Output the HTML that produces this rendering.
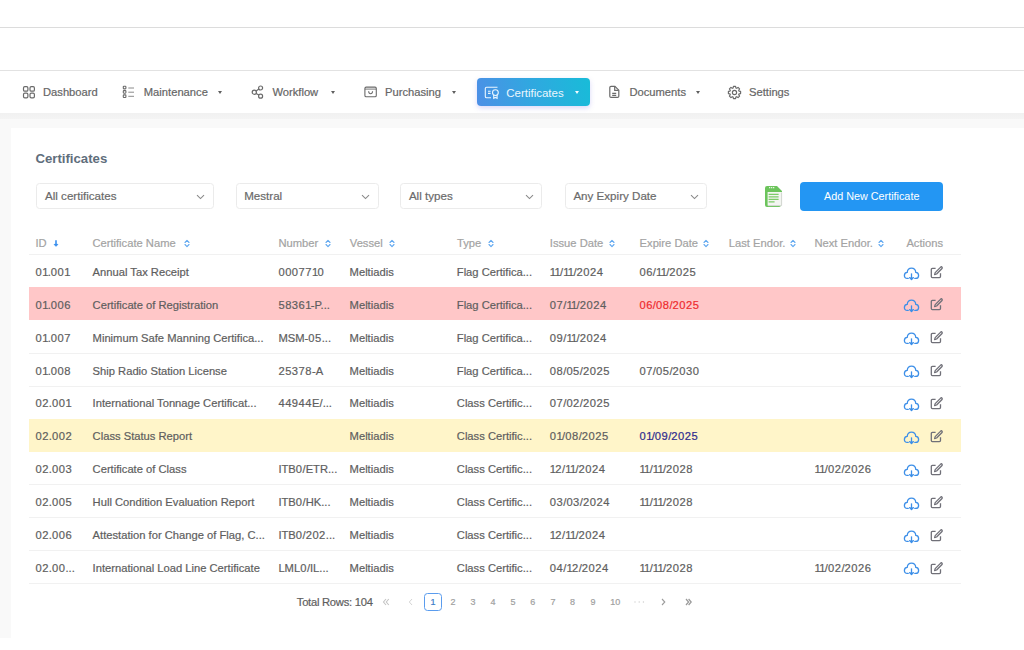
<!DOCTYPE html>
<html><head><meta charset="utf-8"><style>
html,body{margin:0;padding:0;}
body{width:1024px;height:650px;position:relative;overflow:hidden;background:#fff;font-family:"Liberation Sans",sans-serif;}
.t{position:absolute;white-space:nowrap;line-height:1;-webkit-text-stroke:0.2px currentColor;}
.ic{position:absolute;overflow:visible;}
.topline{position:absolute;left:0;width:1024px;height:1px;background:#dcdcdc;}
.content{position:absolute;left:0;top:113px;width:1024px;height:525px;background:#f9f9f9;}
.navshadow{position:absolute;left:0;top:113px;width:1024px;height:5.5px;background:linear-gradient(#f1f1f1,#f4f4f4);}
.card{position:absolute;left:11px;top:128px;width:1013px;height:510px;background:#fff;}
.caret{position:absolute;width:0;height:0;border-left:2.5px solid transparent;border-right:2.5px solid transparent;border-top:3.1px solid #5f5f5f;}
.certbtn{position:absolute;left:477px;top:78px;width:112.5px;height:28.3px;border-radius:4px;background:linear-gradient(75deg,#4d8fe6 0%,#30a8e0 50%,#18bcd8 100%);box-shadow:0 2px 5px rgba(110,100,230,0.25);}
.sel{position:absolute;top:183.2px;height:26px;border:1px solid #ebebeb;border-radius:3.5px;box-sizing:border-box;background:#fff;}
.addbtn{position:absolute;left:800.4px;top:182.2px;width:142.6px;height:28.6px;border-radius:4px;background:#2396f3;color:#fff;font-size:10.8px;line-height:29px;text-align:center;}
.hl{position:absolute;left:29px;width:932px;height:1px;background:#f1f1f1;}
.rowbg{position:absolute;left:28.6px;width:932.4px;}
.pg1{position:absolute;left:424.2px;top:593.2px;width:17.8px;height:17.4px;box-sizing:border-box;border:1.2px solid #5a9cee;border-radius:3.5px;}
</style></head><body>
<div class="topline" style="top:27px"></div>
<div class="topline" style="top:70px;background:#e2e2e2"></div>
<div class="content"></div>
<div class="navshadow"></div>
<div class="card"></div>

<svg class="ic" style="left:22px;top:85px" width="14" height="14" viewBox="0 0 14 14" fill="none" stroke="#6a6a6a" stroke-width="1.2">
<rect x="1.5" y="1.6" width="4.4" height="4.6" rx="1.3"/><rect x="8.0" y="1.6" width="4.4" height="4.6" rx="1.3"/>
<rect x="1.5" y="8.2" width="4.4" height="4.6" rx="1.3"/><rect x="8.0" y="8.2" width="4.4" height="4.6" rx="1.3"/>
</svg>
<svg class="ic" style="left:121px;top:85px" width="14" height="14" viewBox="0 0 14 14" fill="none" stroke="#6a6a6a" stroke-width="1.1">
<rect x="2.3" y="1.3" width="2.6" height="2.6" rx="0.6"/><rect x="2.3" y="5.6" width="2.6" height="2.6" rx="0.6"/><rect x="2.3" y="9.9" width="2.6" height="2.6" rx="0.6"/>
<path d="M7.3 3.0H13M7.3 7.2H13M7.3 11.3H13" stroke="#8a8a8a" stroke-width="1"/>
</svg>
<svg class="ic" style="left:250px;top:85px" width="14" height="14" viewBox="0 0 14 14" fill="none" stroke="#6a6a6a" stroke-width="1.2">
<circle cx="4.3" cy="7.2" r="2.1"/><circle cx="10.6" cy="3.0" r="2.0"/><circle cx="10.6" cy="11.2" r="2.0"/>
<path d="M6.1 6.0L8.9 4.1M6.1 8.4L8.9 10.1"/>
</svg>
<svg class="ic" style="left:363px;top:85px" width="15" height="14" viewBox="0 0 15 14" fill="none" stroke="#6a6a6a" stroke-width="1.1">
<rect x="1.9" y="2.1" width="11.4" height="9.7" rx="1.3"/><path d="M1.9 4.1H13.3" stroke-width="0.9"/><path d="M5.6 6.3Q5.8 8.7 7.6 8.7Q9.4 8.7 9.6 6.3"/>
</svg>
<svg class="ic" style="left:608.3px;top:85.4px" width="13" height="14" viewBox="0 0 13 14" fill="none" stroke="#6a6a6a" stroke-width="1.2">
<path d="M3.0 1.3H6.9L10.8 5.2V11.2Q10.8 12.4 9.6 12.4H3.0Q1.8 12.4 1.8 11.2V2.5Q1.8 1.3 3.0 1.3Z"/><path d="M6.7 1.5V5.4H10.6"/><path d="M4.2 8.3H8.2M4.2 10.3H8.2"/>
</svg>
<svg class="ic" style="left:727.4px;top:84.6px" width="15" height="15" viewBox="0 0 15 15" fill="none" stroke="#6a6a6a" stroke-width="1.15" stroke-linejoin="round">
<path d="M6.09 3.02 L6.42 1.39 L8.58 1.39 L8.91 3.02 L9.67 3.33 L11.06 2.42 L12.58 3.94 L11.67 5.33 L11.98 6.09 L13.61 6.42 L13.61 8.58 L11.98 8.91 L11.67 9.67 L12.58 11.06 L11.06 12.58 L9.67 11.67 L8.91 11.98 L8.58 13.61 L6.42 13.61 L6.09 11.98 L5.33 11.67 L3.94 12.58 L2.42 11.06 L3.33 9.67 L3.02 8.91 L1.39 8.58 L1.39 6.42 L3.02 6.09 L3.33 5.33 L2.42 3.94 L3.94 2.42 L5.33 3.33Z"/>
<circle cx="7.5" cy="7.5" r="2.1"/>
</svg>

<div class="t" style="left:43.00px;top:87.28px;font-size:11.2px;color:#666666;font-weight:400;">Dashboard</div>
<div class="t" style="left:143.80px;top:87.28px;font-size:11.2px;color:#666666;font-weight:400;">Maintenance</div>
<div class="caret" style="left:217.8px;top:90.5px;border-top-color:#5f5f5f"></div>
<div class="t" style="left:272.40px;top:87.28px;font-size:11.2px;color:#666666;font-weight:400;">Workflow</div>
<div class="caret" style="left:331.2px;top:90.5px;border-top-color:#5f5f5f"></div>
<div class="t" style="left:385.00px;top:87.28px;font-size:11.2px;color:#666666;font-weight:400;">Purchasing</div>
<div class="caret" style="left:451.8px;top:90.5px;border-top-color:#5f5f5f"></div>
<div class="t" style="left:629.40px;top:87.28px;font-size:11.2px;color:#666666;font-weight:400;">Documents</div>
<div class="caret" style="left:696.2px;top:90.5px;border-top-color:#5f5f5f"></div>
<div class="t" style="left:749.00px;top:87.28px;font-size:11.2px;color:#666666;font-weight:400;">Settings</div>


<div class="certbtn"></div>
<svg class="ic" style="left:484.3px;top:85.6px" width="16" height="15" viewBox="0 0 16 15" fill="none" stroke="#eaf6ff" stroke-width="1.1">
<path d="M13.5 1.3H2.6Q1.3 1.3 1.3 2.6V10.5Q1.3 11.8 2.6 11.8H7"/><path d="M4 5.2H6.6M4 7.4H6.6"/>
<circle cx="11.4" cy="6.6" r="2.9"/><path d="M9.7 9.0V12.3L11.4 11.4L13.1 12.3V9.0"/>
</svg>
<div class="t" style="left:506.20px;top:87.62px;font-size:11.5px;color:#eaf6fd;font-weight:400;-webkit-text-stroke:0;">Certificates</div>
<div class="caret" style="left:574.6px;top:91.0px;border-top-color:#f4fbff"></div>

<div class="t" style="left:35.40px;top:151.98px;font-size:13.2px;color:#5f6e7c;font-weight:700;-webkit-text-stroke:0;">Certificates</div>

<div class="sel" style="left:35.5px;width:178.5px"></div>
<div class="t" style="left:45.00px;top:190.14px;font-size:11.6px;color:#6a6a6a;font-weight:400;">All certificates</div>
<svg class="ic" style="left:196.2px;top:193.6px" width="9" height="6" viewBox="0 0 9 6" fill="none" stroke="#8a8a8a" stroke-width="1.1"><path d="M1 1.2L4.5 4.6L8 1.2"/></svg>
<div class="sel" style="left:236px;width:143px"></div>
<div class="t" style="left:244.20px;top:190.14px;font-size:11.6px;color:#6a6a6a;font-weight:400;">Mestral</div>
<svg class="ic" style="left:360.6px;top:193.6px" width="9" height="6" viewBox="0 0 9 6" fill="none" stroke="#8a8a8a" stroke-width="1.1"><path d="M1 1.2L4.5 4.6L8 1.2"/></svg>
<div class="sel" style="left:400.3px;width:142px"></div>
<div class="t" style="left:408.90px;top:190.14px;font-size:11.6px;color:#6a6a6a;font-weight:400;">All types</div>
<svg class="ic" style="left:525.2px;top:193.6px" width="9" height="6" viewBox="0 0 9 6" fill="none" stroke="#8a8a8a" stroke-width="1.1"><path d="M1 1.2L4.5 4.6L8 1.2"/></svg>
<div class="sel" style="left:564.8px;width:142.2px"></div>
<div class="t" style="left:573.40px;top:190.14px;font-size:11.6px;color:#6a6a6a;font-weight:400;">Any Expiry Date</div>
<svg class="ic" style="left:689.6px;top:193.6px" width="9" height="6" viewBox="0 0 9 6" fill="none" stroke="#8a8a8a" stroke-width="1.1"><path d="M1 1.2L4.5 4.6L8 1.2"/></svg>


<svg class="ic" style="left:764px;top:185px" width="19" height="23" viewBox="0 0 19 23">
<path d="M3 1H13L18 6V7H4V20.5H16.5V21.6Q16 22 15 22H3Q1 22 1 20V3Q1 1 3 1Z" fill="#6cc45c"/>
<rect x="3.6" y="7" width="14.2" height="13.6" fill="#f3f5f1"/>
<path d="M17.6 7.5V20.6H4" stroke="#d2d6d0" stroke-width="1" fill="none"/>
<path d="M4.6 9.3H14.6M4.6 11.8H14.6M4.6 14.3H14.6M4.6 16.8H10.6" stroke="#7ccb68" stroke-width="1.2"/>
<path d="M5 2.6H11" stroke="#e6f7e0" stroke-width="1.2" stroke-dasharray="1.3 0.7"/>
</svg>

<div class="addbtn">Add New Certificate</div>

<div class="t" style="left:35.40px;top:237.68px;font-size:11.2px;color:#a3a3a3;font-weight:400;">ID</div>
<svg class="ic" style="left:51.5px;top:239px" width="8" height="9" viewBox="0 0 8 9" fill="none" stroke="#3a90ee" stroke-width="1.6" stroke-linejoin="round"><path d="M4 1.3V6"/><path d="M2.2 5.4L4 7.3L5.8 5.4Z" fill="#3a90ee" stroke-width="1"/></svg>
<div class="t" style="left:92.40px;top:237.68px;font-size:11.2px;color:#a3a3a3;font-weight:400;">Certificate Name</div>
<svg class="ic" style="left:183.5px;top:239.3px" width="6" height="9" viewBox="0 0 6 9" fill="none" stroke="#60a8f0" stroke-width="1.1" stroke-linecap="round" stroke-linejoin="round"><path d="M1 3.5L3 1.4L5 3.5M1 5.5L3 7.6L5 5.5"/></svg>
<div class="t" style="left:278.40px;top:237.68px;font-size:11.2px;color:#a3a3a3;font-weight:400;">Number</div>
<svg class="ic" style="left:325.0px;top:239.3px" width="6" height="9" viewBox="0 0 6 9" fill="none" stroke="#60a8f0" stroke-width="1.1" stroke-linecap="round" stroke-linejoin="round"><path d="M1 3.5L3 1.4L5 3.5M1 5.5L3 7.6L5 5.5"/></svg>
<div class="t" style="left:349.80px;top:237.68px;font-size:11.2px;color:#a3a3a3;font-weight:400;">Vessel</div>
<svg class="ic" style="left:389.0px;top:239.3px" width="6" height="9" viewBox="0 0 6 9" fill="none" stroke="#60a8f0" stroke-width="1.1" stroke-linecap="round" stroke-linejoin="round"><path d="M1 3.5L3 1.4L5 3.5M1 5.5L3 7.6L5 5.5"/></svg>
<div class="t" style="left:457.00px;top:237.68px;font-size:11.2px;color:#a3a3a3;font-weight:400;">Type</div>
<svg class="ic" style="left:487.5px;top:239.3px" width="6" height="9" viewBox="0 0 6 9" fill="none" stroke="#60a8f0" stroke-width="1.1" stroke-linecap="round" stroke-linejoin="round"><path d="M1 3.5L3 1.4L5 3.5M1 5.5L3 7.6L5 5.5"/></svg>
<div class="t" style="left:549.80px;top:237.68px;font-size:11.2px;color:#a3a3a3;font-weight:400;">Issue Date</div>
<svg class="ic" style="left:608.7px;top:239.3px" width="6" height="9" viewBox="0 0 6 9" fill="none" stroke="#60a8f0" stroke-width="1.1" stroke-linecap="round" stroke-linejoin="round"><path d="M1 3.5L3 1.4L5 3.5M1 5.5L3 7.6L5 5.5"/></svg>
<div class="t" style="left:639.60px;top:237.68px;font-size:11.2px;color:#a3a3a3;font-weight:400;">Expire Date</div>
<svg class="ic" style="left:703.3px;top:239.3px" width="6" height="9" viewBox="0 0 6 9" fill="none" stroke="#60a8f0" stroke-width="1.1" stroke-linecap="round" stroke-linejoin="round"><path d="M1 3.5L3 1.4L5 3.5M1 5.5L3 7.6L5 5.5"/></svg>
<div class="t" style="left:728.80px;top:237.68px;font-size:11.2px;color:#a3a3a3;font-weight:400;">Last Endor.</div>
<svg class="ic" style="left:790.0px;top:239.3px" width="6" height="9" viewBox="0 0 6 9" fill="none" stroke="#60a8f0" stroke-width="1.1" stroke-linecap="round" stroke-linejoin="round"><path d="M1 3.5L3 1.4L5 3.5M1 5.5L3 7.6L5 5.5"/></svg>
<div class="t" style="left:814.40px;top:237.68px;font-size:11.2px;color:#a3a3a3;font-weight:400;">Next Endor.</div>
<svg class="ic" style="left:878.0px;top:239.3px" width="6" height="9" viewBox="0 0 6 9" fill="none" stroke="#60a8f0" stroke-width="1.1" stroke-linecap="round" stroke-linejoin="round"><path d="M1 3.5L3 1.4L5 3.5M1 5.5L3 7.6L5 5.5"/></svg>
<div class="t" style="left:906.40px;top:237.68px;font-size:11.2px;color:#a3a3a3;font-weight:400;">Actions</div>

<div class="hl" style="top:254.10px"></div>
<div class="hl" style="top:286.98px"></div>
<div class="t" style="left:35.40px;top:266.88px;font-size:11.2px;color:#5e5e5e;font-weight:400;"><span style="letter-spacing:0.5px">0</span><span style="letter-spacing:-0.7px">1</span>.<span style="letter-spacing:0.5px">0</span><span style="letter-spacing:0.5px">0</span><span style="letter-spacing:-0.7px">1</span></div>
<div class="t" style="left:92.60px;top:266.88px;font-size:11.2px;color:#5e5e5e;font-weight:400;">Annual Tax Receipt</div>
<div class="t" style="left:278.40px;top:266.88px;font-size:11.2px;color:#5e5e5e;font-weight:400;"><span style="letter-spacing:0.5px">0</span><span style="letter-spacing:0.5px">0</span><span style="letter-spacing:0.5px">0</span><span style="letter-spacing:0.5px">7</span><span style="letter-spacing:0.5px">7</span><span style="letter-spacing:-0.7px">1</span><span style="letter-spacing:0.5px">0</span></div>
<div class="t" style="left:349.60px;top:266.88px;font-size:11.2px;color:#5e5e5e;font-weight:400;">Meltiadis</div>
<div class="t" style="left:456.80px;top:266.88px;font-size:11.2px;color:#5e5e5e;font-weight:400;">Flag Certifica...</div>
<div class="t" style="left:549.80px;top:266.88px;font-size:11.2px;color:#5e5e5e;font-weight:400;"><span style="letter-spacing:-0.7px">1</span><span style="letter-spacing:-0.7px">1</span>/<span style="letter-spacing:-0.7px">1</span><span style="letter-spacing:-0.7px">1</span>/<span style="letter-spacing:0.5px">2</span><span style="letter-spacing:0.5px">0</span><span style="letter-spacing:0.5px">2</span><span style="letter-spacing:0.5px">4</span></div>
<div class="t" style="left:639.40px;top:266.88px;font-size:11.2px;color:#5e5e5e;font-weight:400;"><span style="letter-spacing:0.5px">0</span><span style="letter-spacing:0.5px">6</span>/<span style="letter-spacing:-0.7px">1</span><span style="letter-spacing:-0.7px">1</span>/<span style="letter-spacing:0.5px">2</span><span style="letter-spacing:0.5px">0</span><span style="letter-spacing:0.5px">2</span><span style="letter-spacing:0.5px">5</span></div>
<svg class="ic" style="left:903px;top:265.50px" width="17" height="15" viewBox="0 0 17 15" fill="none" stroke="#3d8fe8" stroke-width="1.3" stroke-linecap="round">
<path d="M5.2 12.4H4.3Q1.4 12.4 1.4 9.4Q1.4 6.6 4.2 6.4Q4.6 2.2 8.5 2.2Q12.4 2.2 12.8 6.4Q15.6 6.6 15.6 9.4Q15.6 12.4 12.7 12.4H11.8"/>
<path d="M8.5 7.8V13"/><path d="M6.6 11.6L8.5 13.6L10.4 11.6" fill="#3d8fe8" stroke-linejoin="round"/>
</svg>
<svg class="ic" style="left:929px;top:264.60px" width="15" height="15" viewBox="0 0 15 15" fill="none" stroke="#707078" stroke-width="1.3" stroke-linejoin="round">
<path d="M6.6 3.4H3.4Q2.3 3.4 2.3 4.5V11.5Q2.3 12.6 3.4 12.6H10.4Q11.5 12.6 11.5 11.5V8.3"/>
<path d="M12.6 1.6Q13.8 2.8 12.8 3.8L7.6 9L5.6 9.6L6.2 7.6L11.4 2.4Q12 1.6 12.6 1.6Z"/>
</svg>
<div class="rowbg" style="top:287.48px;height:32.88px;background:#ffc7c8"></div>
<div class="t" style="left:35.40px;top:299.76px;font-size:11.2px;color:#5e5e5e;font-weight:400;"><span style="letter-spacing:0.5px">0</span><span style="letter-spacing:-0.7px">1</span>.<span style="letter-spacing:0.5px">0</span><span style="letter-spacing:0.5px">0</span><span style="letter-spacing:0.5px">6</span></div>
<div class="t" style="left:92.60px;top:299.76px;font-size:11.2px;color:#5e5e5e;font-weight:400;">Certificate of Registration</div>
<div class="t" style="left:278.40px;top:299.76px;font-size:11.2px;color:#5e5e5e;font-weight:400;"><span style="letter-spacing:0.5px">5</span><span style="letter-spacing:0.5px">8</span><span style="letter-spacing:0.5px">3</span><span style="letter-spacing:0.5px">6</span><span style="letter-spacing:-0.7px">1</span>-P...</div>
<div class="t" style="left:349.60px;top:299.76px;font-size:11.2px;color:#5e5e5e;font-weight:400;">Meltiadis</div>
<div class="t" style="left:456.80px;top:299.76px;font-size:11.2px;color:#5e5e5e;font-weight:400;">Flag Certifica...</div>
<div class="t" style="left:549.80px;top:299.76px;font-size:11.2px;color:#5e5e5e;font-weight:400;"><span style="letter-spacing:0.5px">0</span><span style="letter-spacing:0.5px">7</span>/<span style="letter-spacing:-0.7px">1</span><span style="letter-spacing:-0.7px">1</span>/<span style="letter-spacing:0.5px">2</span><span style="letter-spacing:0.5px">0</span><span style="letter-spacing:0.5px">2</span><span style="letter-spacing:0.5px">4</span></div>
<div class="t" style="left:639.40px;top:299.76px;font-size:11.2px;color:#ee2b2e;font-weight:400;"><span style="letter-spacing:0.5px">0</span><span style="letter-spacing:0.5px">6</span>/<span style="letter-spacing:0.5px">0</span><span style="letter-spacing:0.5px">8</span>/<span style="letter-spacing:0.5px">2</span><span style="letter-spacing:0.5px">0</span><span style="letter-spacing:0.5px">2</span><span style="letter-spacing:0.5px">5</span></div>
<svg class="ic" style="left:903px;top:298.38px" width="17" height="15" viewBox="0 0 17 15" fill="none" stroke="#3d8fe8" stroke-width="1.3" stroke-linecap="round">
<path d="M5.2 12.4H4.3Q1.4 12.4 1.4 9.4Q1.4 6.6 4.2 6.4Q4.6 2.2 8.5 2.2Q12.4 2.2 12.8 6.4Q15.6 6.6 15.6 9.4Q15.6 12.4 12.7 12.4H11.8"/>
<path d="M8.5 7.8V13"/><path d="M6.6 11.6L8.5 13.6L10.4 11.6" fill="#3d8fe8" stroke-linejoin="round"/>
</svg>
<svg class="ic" style="left:929px;top:297.48px" width="15" height="15" viewBox="0 0 15 15" fill="none" stroke="#707078" stroke-width="1.3" stroke-linejoin="round">
<path d="M6.6 3.4H3.4Q2.3 3.4 2.3 4.5V11.5Q2.3 12.6 3.4 12.6H10.4Q11.5 12.6 11.5 11.5V8.3"/>
<path d="M12.6 1.6Q13.8 2.8 12.8 3.8L7.6 9L5.6 9.6L6.2 7.6L11.4 2.4Q12 1.6 12.6 1.6Z"/>
</svg>
<div class="hl" style="top:352.74px"></div>
<div class="t" style="left:35.40px;top:332.64px;font-size:11.2px;color:#5e5e5e;font-weight:400;"><span style="letter-spacing:0.5px">0</span><span style="letter-spacing:-0.7px">1</span>.<span style="letter-spacing:0.5px">0</span><span style="letter-spacing:0.5px">0</span><span style="letter-spacing:0.5px">7</span></div>
<div class="t" style="left:92.60px;top:332.64px;font-size:11.2px;color:#5e5e5e;font-weight:400;">Minimum Safe Manning Certifica...</div>
<div class="t" style="left:278.40px;top:332.64px;font-size:11.2px;color:#5e5e5e;font-weight:400;">MSM-<span style="letter-spacing:0.5px">0</span><span style="letter-spacing:0.5px">5</span>...</div>
<div class="t" style="left:349.60px;top:332.64px;font-size:11.2px;color:#5e5e5e;font-weight:400;">Meltiadis</div>
<div class="t" style="left:456.80px;top:332.64px;font-size:11.2px;color:#5e5e5e;font-weight:400;">Flag Certifica...</div>
<div class="t" style="left:549.80px;top:332.64px;font-size:11.2px;color:#5e5e5e;font-weight:400;"><span style="letter-spacing:0.5px">0</span><span style="letter-spacing:0.5px">9</span>/<span style="letter-spacing:-0.7px">1</span><span style="letter-spacing:-0.7px">1</span>/<span style="letter-spacing:0.5px">2</span><span style="letter-spacing:0.5px">0</span><span style="letter-spacing:0.5px">2</span><span style="letter-spacing:0.5px">4</span></div>
<svg class="ic" style="left:903px;top:331.26px" width="17" height="15" viewBox="0 0 17 15" fill="none" stroke="#3d8fe8" stroke-width="1.3" stroke-linecap="round">
<path d="M5.2 12.4H4.3Q1.4 12.4 1.4 9.4Q1.4 6.6 4.2 6.4Q4.6 2.2 8.5 2.2Q12.4 2.2 12.8 6.4Q15.6 6.6 15.6 9.4Q15.6 12.4 12.7 12.4H11.8"/>
<path d="M8.5 7.8V13"/><path d="M6.6 11.6L8.5 13.6L10.4 11.6" fill="#3d8fe8" stroke-linejoin="round"/>
</svg>
<svg class="ic" style="left:929px;top:330.36px" width="15" height="15" viewBox="0 0 15 15" fill="none" stroke="#707078" stroke-width="1.3" stroke-linejoin="round">
<path d="M6.6 3.4H3.4Q2.3 3.4 2.3 4.5V11.5Q2.3 12.6 3.4 12.6H10.4Q11.5 12.6 11.5 11.5V8.3"/>
<path d="M12.6 1.6Q13.8 2.8 12.8 3.8L7.6 9L5.6 9.6L6.2 7.6L11.4 2.4Q12 1.6 12.6 1.6Z"/>
</svg>
<div class="hl" style="top:385.62px"></div>
<div class="t" style="left:35.40px;top:365.52px;font-size:11.2px;color:#5e5e5e;font-weight:400;"><span style="letter-spacing:0.5px">0</span><span style="letter-spacing:-0.7px">1</span>.<span style="letter-spacing:0.5px">0</span><span style="letter-spacing:0.5px">0</span><span style="letter-spacing:0.5px">8</span></div>
<div class="t" style="left:92.60px;top:365.52px;font-size:11.2px;color:#5e5e5e;font-weight:400;">Ship Radio Station License</div>
<div class="t" style="left:278.40px;top:365.52px;font-size:11.2px;color:#5e5e5e;font-weight:400;"><span style="letter-spacing:0.5px">2</span><span style="letter-spacing:0.5px">5</span><span style="letter-spacing:0.5px">3</span><span style="letter-spacing:0.5px">7</span><span style="letter-spacing:0.5px">8</span>-A</div>
<div class="t" style="left:349.60px;top:365.52px;font-size:11.2px;color:#5e5e5e;font-weight:400;">Meltiadis</div>
<div class="t" style="left:456.80px;top:365.52px;font-size:11.2px;color:#5e5e5e;font-weight:400;">Flag Certifica...</div>
<div class="t" style="left:549.80px;top:365.52px;font-size:11.2px;color:#5e5e5e;font-weight:400;"><span style="letter-spacing:0.5px">0</span><span style="letter-spacing:0.5px">8</span>/<span style="letter-spacing:0.5px">0</span><span style="letter-spacing:0.5px">5</span>/<span style="letter-spacing:0.5px">2</span><span style="letter-spacing:0.5px">0</span><span style="letter-spacing:0.5px">2</span><span style="letter-spacing:0.5px">5</span></div>
<div class="t" style="left:639.40px;top:365.52px;font-size:11.2px;color:#5e5e5e;font-weight:400;"><span style="letter-spacing:0.5px">0</span><span style="letter-spacing:0.5px">7</span>/<span style="letter-spacing:0.5px">0</span><span style="letter-spacing:0.5px">5</span>/<span style="letter-spacing:0.5px">2</span><span style="letter-spacing:0.5px">0</span><span style="letter-spacing:0.5px">3</span><span style="letter-spacing:0.5px">0</span></div>
<svg class="ic" style="left:903px;top:364.14px" width="17" height="15" viewBox="0 0 17 15" fill="none" stroke="#3d8fe8" stroke-width="1.3" stroke-linecap="round">
<path d="M5.2 12.4H4.3Q1.4 12.4 1.4 9.4Q1.4 6.6 4.2 6.4Q4.6 2.2 8.5 2.2Q12.4 2.2 12.8 6.4Q15.6 6.6 15.6 9.4Q15.6 12.4 12.7 12.4H11.8"/>
<path d="M8.5 7.8V13"/><path d="M6.6 11.6L8.5 13.6L10.4 11.6" fill="#3d8fe8" stroke-linejoin="round"/>
</svg>
<svg class="ic" style="left:929px;top:363.24px" width="15" height="15" viewBox="0 0 15 15" fill="none" stroke="#707078" stroke-width="1.3" stroke-linejoin="round">
<path d="M6.6 3.4H3.4Q2.3 3.4 2.3 4.5V11.5Q2.3 12.6 3.4 12.6H10.4Q11.5 12.6 11.5 11.5V8.3"/>
<path d="M12.6 1.6Q13.8 2.8 12.8 3.8L7.6 9L5.6 9.6L6.2 7.6L11.4 2.4Q12 1.6 12.6 1.6Z"/>
</svg>
<div class="hl" style="top:418.50px"></div>
<div class="t" style="left:35.40px;top:398.40px;font-size:11.2px;color:#5e5e5e;font-weight:400;"><span style="letter-spacing:0.5px">0</span><span style="letter-spacing:0.5px">2</span>.<span style="letter-spacing:0.5px">0</span><span style="letter-spacing:0.5px">0</span><span style="letter-spacing:-0.7px">1</span></div>
<div class="t" style="left:92.60px;top:398.40px;font-size:11.2px;color:#5e5e5e;font-weight:400;">International Tonnage Certificat...</div>
<div class="t" style="left:278.40px;top:398.40px;font-size:11.2px;color:#5e5e5e;font-weight:400;"><span style="letter-spacing:0.5px">4</span><span style="letter-spacing:0.5px">4</span><span style="letter-spacing:0.5px">9</span><span style="letter-spacing:0.5px">4</span><span style="letter-spacing:0.5px">4</span>E/...</div>
<div class="t" style="left:349.60px;top:398.40px;font-size:11.2px;color:#5e5e5e;font-weight:400;">Meltiadis</div>
<div class="t" style="left:456.80px;top:398.40px;font-size:11.2px;color:#5e5e5e;font-weight:400;">Class Certific...</div>
<div class="t" style="left:549.80px;top:398.40px;font-size:11.2px;color:#5e5e5e;font-weight:400;"><span style="letter-spacing:0.5px">0</span><span style="letter-spacing:0.5px">7</span>/<span style="letter-spacing:0.5px">0</span><span style="letter-spacing:0.5px">2</span>/<span style="letter-spacing:0.5px">2</span><span style="letter-spacing:0.5px">0</span><span style="letter-spacing:0.5px">2</span><span style="letter-spacing:0.5px">5</span></div>
<svg class="ic" style="left:903px;top:397.02px" width="17" height="15" viewBox="0 0 17 15" fill="none" stroke="#3d8fe8" stroke-width="1.3" stroke-linecap="round">
<path d="M5.2 12.4H4.3Q1.4 12.4 1.4 9.4Q1.4 6.6 4.2 6.4Q4.6 2.2 8.5 2.2Q12.4 2.2 12.8 6.4Q15.6 6.6 15.6 9.4Q15.6 12.4 12.7 12.4H11.8"/>
<path d="M8.5 7.8V13"/><path d="M6.6 11.6L8.5 13.6L10.4 11.6" fill="#3d8fe8" stroke-linejoin="round"/>
</svg>
<svg class="ic" style="left:929px;top:396.12px" width="15" height="15" viewBox="0 0 15 15" fill="none" stroke="#707078" stroke-width="1.3" stroke-linejoin="round">
<path d="M6.6 3.4H3.4Q2.3 3.4 2.3 4.5V11.5Q2.3 12.6 3.4 12.6H10.4Q11.5 12.6 11.5 11.5V8.3"/>
<path d="M12.6 1.6Q13.8 2.8 12.8 3.8L7.6 9L5.6 9.6L6.2 7.6L11.4 2.4Q12 1.6 12.6 1.6Z"/>
</svg>
<div class="rowbg" style="top:419.00px;height:32.88px;background:#fff5c9"></div>
<div class="t" style="left:35.40px;top:431.28px;font-size:11.2px;color:#5e5e5e;font-weight:400;"><span style="letter-spacing:0.5px">0</span><span style="letter-spacing:0.5px">2</span>.<span style="letter-spacing:0.5px">0</span><span style="letter-spacing:0.5px">0</span><span style="letter-spacing:0.5px">2</span></div>
<div class="t" style="left:92.60px;top:431.28px;font-size:11.2px;color:#5e5e5e;font-weight:400;">Class Status Report</div>
<div class="t" style="left:349.60px;top:431.28px;font-size:11.2px;color:#5e5e5e;font-weight:400;">Meltiadis</div>
<div class="t" style="left:456.80px;top:431.28px;font-size:11.2px;color:#5e5e5e;font-weight:400;">Class Certific...</div>
<div class="t" style="left:549.80px;top:431.28px;font-size:11.2px;color:#5e5e5e;font-weight:400;"><span style="letter-spacing:0.5px">0</span><span style="letter-spacing:-0.7px">1</span>/<span style="letter-spacing:0.5px">0</span><span style="letter-spacing:0.5px">8</span>/<span style="letter-spacing:0.5px">2</span><span style="letter-spacing:0.5px">0</span><span style="letter-spacing:0.5px">2</span><span style="letter-spacing:0.5px">5</span></div>
<div class="t" style="left:639.40px;top:431.28px;font-size:11.2px;color:#2e2b8e;font-weight:400;"><span style="letter-spacing:0.5px">0</span><span style="letter-spacing:-0.7px">1</span>/<span style="letter-spacing:0.5px">0</span><span style="letter-spacing:0.5px">9</span>/<span style="letter-spacing:0.5px">2</span><span style="letter-spacing:0.5px">0</span><span style="letter-spacing:0.5px">2</span><span style="letter-spacing:0.5px">5</span></div>
<svg class="ic" style="left:903px;top:429.90px" width="17" height="15" viewBox="0 0 17 15" fill="none" stroke="#3d8fe8" stroke-width="1.3" stroke-linecap="round">
<path d="M5.2 12.4H4.3Q1.4 12.4 1.4 9.4Q1.4 6.6 4.2 6.4Q4.6 2.2 8.5 2.2Q12.4 2.2 12.8 6.4Q15.6 6.6 15.6 9.4Q15.6 12.4 12.7 12.4H11.8"/>
<path d="M8.5 7.8V13"/><path d="M6.6 11.6L8.5 13.6L10.4 11.6" fill="#3d8fe8" stroke-linejoin="round"/>
</svg>
<svg class="ic" style="left:929px;top:429.00px" width="15" height="15" viewBox="0 0 15 15" fill="none" stroke="#707078" stroke-width="1.3" stroke-linejoin="round">
<path d="M6.6 3.4H3.4Q2.3 3.4 2.3 4.5V11.5Q2.3 12.6 3.4 12.6H10.4Q11.5 12.6 11.5 11.5V8.3"/>
<path d="M12.6 1.6Q13.8 2.8 12.8 3.8L7.6 9L5.6 9.6L6.2 7.6L11.4 2.4Q12 1.6 12.6 1.6Z"/>
</svg>
<div class="hl" style="top:484.26px"></div>
<div class="t" style="left:35.40px;top:464.16px;font-size:11.2px;color:#5e5e5e;font-weight:400;"><span style="letter-spacing:0.5px">0</span><span style="letter-spacing:0.5px">2</span>.<span style="letter-spacing:0.5px">0</span><span style="letter-spacing:0.5px">0</span><span style="letter-spacing:0.5px">3</span></div>
<div class="t" style="left:92.60px;top:464.16px;font-size:11.2px;color:#5e5e5e;font-weight:400;">Certificate of Class</div>
<div class="t" style="left:278.40px;top:464.16px;font-size:11.2px;color:#5e5e5e;font-weight:400;">ITB<span style="letter-spacing:0.5px">0</span>/ETR...</div>
<div class="t" style="left:349.60px;top:464.16px;font-size:11.2px;color:#5e5e5e;font-weight:400;">Meltiadis</div>
<div class="t" style="left:456.80px;top:464.16px;font-size:11.2px;color:#5e5e5e;font-weight:400;">Class Certific...</div>
<div class="t" style="left:549.80px;top:464.16px;font-size:11.2px;color:#5e5e5e;font-weight:400;"><span style="letter-spacing:-0.7px">1</span><span style="letter-spacing:0.5px">2</span>/<span style="letter-spacing:-0.7px">1</span><span style="letter-spacing:-0.7px">1</span>/<span style="letter-spacing:0.5px">2</span><span style="letter-spacing:0.5px">0</span><span style="letter-spacing:0.5px">2</span><span style="letter-spacing:0.5px">4</span></div>
<div class="t" style="left:639.40px;top:464.16px;font-size:11.2px;color:#5e5e5e;font-weight:400;"><span style="letter-spacing:-0.7px">1</span><span style="letter-spacing:-0.7px">1</span>/<span style="letter-spacing:-0.7px">1</span><span style="letter-spacing:-0.7px">1</span>/<span style="letter-spacing:0.5px">2</span><span style="letter-spacing:0.5px">0</span><span style="letter-spacing:0.5px">2</span><span style="letter-spacing:0.5px">8</span></div>
<div class="t" style="left:814.60px;top:464.16px;font-size:11.2px;color:#5e5e5e;font-weight:400;"><span style="letter-spacing:-0.7px">1</span><span style="letter-spacing:-0.7px">1</span>/<span style="letter-spacing:0.5px">0</span><span style="letter-spacing:0.5px">2</span>/<span style="letter-spacing:0.5px">2</span><span style="letter-spacing:0.5px">0</span><span style="letter-spacing:0.5px">2</span><span style="letter-spacing:0.5px">6</span></div>
<svg class="ic" style="left:903px;top:462.78px" width="17" height="15" viewBox="0 0 17 15" fill="none" stroke="#3d8fe8" stroke-width="1.3" stroke-linecap="round">
<path d="M5.2 12.4H4.3Q1.4 12.4 1.4 9.4Q1.4 6.6 4.2 6.4Q4.6 2.2 8.5 2.2Q12.4 2.2 12.8 6.4Q15.6 6.6 15.6 9.4Q15.6 12.4 12.7 12.4H11.8"/>
<path d="M8.5 7.8V13"/><path d="M6.6 11.6L8.5 13.6L10.4 11.6" fill="#3d8fe8" stroke-linejoin="round"/>
</svg>
<svg class="ic" style="left:929px;top:461.88px" width="15" height="15" viewBox="0 0 15 15" fill="none" stroke="#707078" stroke-width="1.3" stroke-linejoin="round">
<path d="M6.6 3.4H3.4Q2.3 3.4 2.3 4.5V11.5Q2.3 12.6 3.4 12.6H10.4Q11.5 12.6 11.5 11.5V8.3"/>
<path d="M12.6 1.6Q13.8 2.8 12.8 3.8L7.6 9L5.6 9.6L6.2 7.6L11.4 2.4Q12 1.6 12.6 1.6Z"/>
</svg>
<div class="hl" style="top:517.14px"></div>
<div class="t" style="left:35.40px;top:497.04px;font-size:11.2px;color:#5e5e5e;font-weight:400;"><span style="letter-spacing:0.5px">0</span><span style="letter-spacing:0.5px">2</span>.<span style="letter-spacing:0.5px">0</span><span style="letter-spacing:0.5px">0</span><span style="letter-spacing:0.5px">5</span></div>
<div class="t" style="left:92.60px;top:497.04px;font-size:11.2px;color:#5e5e5e;font-weight:400;">Hull Condition Evaluation Report</div>
<div class="t" style="left:278.40px;top:497.04px;font-size:11.2px;color:#5e5e5e;font-weight:400;">ITB<span style="letter-spacing:0.5px">0</span>/HK...</div>
<div class="t" style="left:349.60px;top:497.04px;font-size:11.2px;color:#5e5e5e;font-weight:400;">Meltiadis</div>
<div class="t" style="left:456.80px;top:497.04px;font-size:11.2px;color:#5e5e5e;font-weight:400;">Class Certific...</div>
<div class="t" style="left:549.80px;top:497.04px;font-size:11.2px;color:#5e5e5e;font-weight:400;"><span style="letter-spacing:0.5px">0</span><span style="letter-spacing:0.5px">3</span>/<span style="letter-spacing:0.5px">0</span><span style="letter-spacing:0.5px">3</span>/<span style="letter-spacing:0.5px">2</span><span style="letter-spacing:0.5px">0</span><span style="letter-spacing:0.5px">2</span><span style="letter-spacing:0.5px">4</span></div>
<div class="t" style="left:639.40px;top:497.04px;font-size:11.2px;color:#5e5e5e;font-weight:400;"><span style="letter-spacing:-0.7px">1</span><span style="letter-spacing:-0.7px">1</span>/<span style="letter-spacing:-0.7px">1</span><span style="letter-spacing:-0.7px">1</span>/<span style="letter-spacing:0.5px">2</span><span style="letter-spacing:0.5px">0</span><span style="letter-spacing:0.5px">2</span><span style="letter-spacing:0.5px">8</span></div>
<svg class="ic" style="left:903px;top:495.66px" width="17" height="15" viewBox="0 0 17 15" fill="none" stroke="#3d8fe8" stroke-width="1.3" stroke-linecap="round">
<path d="M5.2 12.4H4.3Q1.4 12.4 1.4 9.4Q1.4 6.6 4.2 6.4Q4.6 2.2 8.5 2.2Q12.4 2.2 12.8 6.4Q15.6 6.6 15.6 9.4Q15.6 12.4 12.7 12.4H11.8"/>
<path d="M8.5 7.8V13"/><path d="M6.6 11.6L8.5 13.6L10.4 11.6" fill="#3d8fe8" stroke-linejoin="round"/>
</svg>
<svg class="ic" style="left:929px;top:494.76px" width="15" height="15" viewBox="0 0 15 15" fill="none" stroke="#707078" stroke-width="1.3" stroke-linejoin="round">
<path d="M6.6 3.4H3.4Q2.3 3.4 2.3 4.5V11.5Q2.3 12.6 3.4 12.6H10.4Q11.5 12.6 11.5 11.5V8.3"/>
<path d="M12.6 1.6Q13.8 2.8 12.8 3.8L7.6 9L5.6 9.6L6.2 7.6L11.4 2.4Q12 1.6 12.6 1.6Z"/>
</svg>
<div class="hl" style="top:550.02px"></div>
<div class="t" style="left:35.40px;top:529.92px;font-size:11.2px;color:#5e5e5e;font-weight:400;"><span style="letter-spacing:0.5px">0</span><span style="letter-spacing:0.5px">2</span>.<span style="letter-spacing:0.5px">0</span><span style="letter-spacing:0.5px">0</span><span style="letter-spacing:0.5px">6</span></div>
<div class="t" style="left:92.60px;top:529.92px;font-size:11.2px;color:#5e5e5e;font-weight:400;">Attestation for Change of Flag, C...</div>
<div class="t" style="left:278.40px;top:529.92px;font-size:11.2px;color:#5e5e5e;font-weight:400;">ITB<span style="letter-spacing:0.5px">0</span>/<span style="letter-spacing:0.5px">2</span><span style="letter-spacing:0.5px">0</span><span style="letter-spacing:0.5px">2</span>...</div>
<div class="t" style="left:349.60px;top:529.92px;font-size:11.2px;color:#5e5e5e;font-weight:400;">Meltiadis</div>
<div class="t" style="left:456.80px;top:529.92px;font-size:11.2px;color:#5e5e5e;font-weight:400;">Class Certific...</div>
<div class="t" style="left:549.80px;top:529.92px;font-size:11.2px;color:#5e5e5e;font-weight:400;"><span style="letter-spacing:-0.7px">1</span><span style="letter-spacing:0.5px">2</span>/<span style="letter-spacing:-0.7px">1</span><span style="letter-spacing:-0.7px">1</span>/<span style="letter-spacing:0.5px">2</span><span style="letter-spacing:0.5px">0</span><span style="letter-spacing:0.5px">2</span><span style="letter-spacing:0.5px">4</span></div>
<svg class="ic" style="left:903px;top:528.54px" width="17" height="15" viewBox="0 0 17 15" fill="none" stroke="#3d8fe8" stroke-width="1.3" stroke-linecap="round">
<path d="M5.2 12.4H4.3Q1.4 12.4 1.4 9.4Q1.4 6.6 4.2 6.4Q4.6 2.2 8.5 2.2Q12.4 2.2 12.8 6.4Q15.6 6.6 15.6 9.4Q15.6 12.4 12.7 12.4H11.8"/>
<path d="M8.5 7.8V13"/><path d="M6.6 11.6L8.5 13.6L10.4 11.6" fill="#3d8fe8" stroke-linejoin="round"/>
</svg>
<svg class="ic" style="left:929px;top:527.64px" width="15" height="15" viewBox="0 0 15 15" fill="none" stroke="#707078" stroke-width="1.3" stroke-linejoin="round">
<path d="M6.6 3.4H3.4Q2.3 3.4 2.3 4.5V11.5Q2.3 12.6 3.4 12.6H10.4Q11.5 12.6 11.5 11.5V8.3"/>
<path d="M12.6 1.6Q13.8 2.8 12.8 3.8L7.6 9L5.6 9.6L6.2 7.6L11.4 2.4Q12 1.6 12.6 1.6Z"/>
</svg>
<div class="hl" style="top:582.90px"></div>
<div class="t" style="left:35.40px;top:562.80px;font-size:11.2px;color:#5e5e5e;font-weight:400;"><span style="letter-spacing:0.5px">0</span><span style="letter-spacing:0.5px">2</span>.<span style="letter-spacing:0.5px">0</span><span style="letter-spacing:0.5px">0</span>...</div>
<div class="t" style="left:92.60px;top:562.80px;font-size:11.2px;color:#5e5e5e;font-weight:400;">International Load Line Certificate</div>
<div class="t" style="left:278.40px;top:562.80px;font-size:11.2px;color:#5e5e5e;font-weight:400;">LML<span style="letter-spacing:0.5px">0</span>/IL...</div>
<div class="t" style="left:349.60px;top:562.80px;font-size:11.2px;color:#5e5e5e;font-weight:400;">Meltiadis</div>
<div class="t" style="left:456.80px;top:562.80px;font-size:11.2px;color:#5e5e5e;font-weight:400;">Class Certific...</div>
<div class="t" style="left:549.80px;top:562.80px;font-size:11.2px;color:#5e5e5e;font-weight:400;"><span style="letter-spacing:0.5px">0</span><span style="letter-spacing:0.5px">4</span>/<span style="letter-spacing:-0.7px">1</span><span style="letter-spacing:0.5px">2</span>/<span style="letter-spacing:0.5px">2</span><span style="letter-spacing:0.5px">0</span><span style="letter-spacing:0.5px">2</span><span style="letter-spacing:0.5px">4</span></div>
<div class="t" style="left:639.40px;top:562.80px;font-size:11.2px;color:#5e5e5e;font-weight:400;"><span style="letter-spacing:-0.7px">1</span><span style="letter-spacing:-0.7px">1</span>/<span style="letter-spacing:-0.7px">1</span><span style="letter-spacing:-0.7px">1</span>/<span style="letter-spacing:0.5px">2</span><span style="letter-spacing:0.5px">0</span><span style="letter-spacing:0.5px">2</span><span style="letter-spacing:0.5px">8</span></div>
<div class="t" style="left:814.60px;top:562.80px;font-size:11.2px;color:#5e5e5e;font-weight:400;"><span style="letter-spacing:-0.7px">1</span><span style="letter-spacing:-0.7px">1</span>/<span style="letter-spacing:0.5px">0</span><span style="letter-spacing:0.5px">2</span>/<span style="letter-spacing:0.5px">2</span><span style="letter-spacing:0.5px">0</span><span style="letter-spacing:0.5px">2</span><span style="letter-spacing:0.5px">6</span></div>
<svg class="ic" style="left:903px;top:561.42px" width="17" height="15" viewBox="0 0 17 15" fill="none" stroke="#3d8fe8" stroke-width="1.3" stroke-linecap="round">
<path d="M5.2 12.4H4.3Q1.4 12.4 1.4 9.4Q1.4 6.6 4.2 6.4Q4.6 2.2 8.5 2.2Q12.4 2.2 12.8 6.4Q15.6 6.6 15.6 9.4Q15.6 12.4 12.7 12.4H11.8"/>
<path d="M8.5 7.8V13"/><path d="M6.6 11.6L8.5 13.6L10.4 11.6" fill="#3d8fe8" stroke-linejoin="round"/>
</svg>
<svg class="ic" style="left:929px;top:560.52px" width="15" height="15" viewBox="0 0 15 15" fill="none" stroke="#707078" stroke-width="1.3" stroke-linejoin="round">
<path d="M6.6 3.4H3.4Q2.3 3.4 2.3 4.5V11.5Q2.3 12.6 3.4 12.6H10.4Q11.5 12.6 11.5 11.5V8.3"/>
<path d="M12.6 1.6Q13.8 2.8 12.8 3.8L7.6 9L5.6 9.6L6.2 7.6L11.4 2.4Q12 1.6 12.6 1.6Z"/>
</svg>

<div class="t" style="left:296.80px;top:597.08px;font-size:11.2px;color:#5e5e5e;font-weight:400;letter-spacing:-0.25px;">Total Rows: 104</div>
<svg class="ic" style="left:382px;top:597.5px" width="8" height="8" viewBox="0 0 8 8" fill="none" stroke="#c4c4c4" stroke-width="1.1"><path d="M4 1L1.5 4L4 7M6.8 1L4.3 4L6.8 7"/></svg>
<svg class="ic" style="left:408px;top:597.5px" width="6" height="8" viewBox="0 0 6 8" fill="none" stroke="#d4d4d4" stroke-width="1"><path d="M4 1L1.3 4L4 7"/></svg>
<div class="pg1"></div>
<div class="t" style="left:430.50px;top:597.55px;font-size:9px;color:#3a7cc8;font-weight:400;">1</div>
<div class="t" style="left:450.50px;top:597.55px;font-size:9px;color:#a0a0a0;font-weight:400;">2</div>
<div class="t" style="left:470.40px;top:597.55px;font-size:9px;color:#a0a0a0;font-weight:400;">3</div>
<div class="t" style="left:490.40px;top:597.55px;font-size:9px;color:#a0a0a0;font-weight:400;">4</div>
<div class="t" style="left:510.40px;top:597.55px;font-size:9px;color:#a0a0a0;font-weight:400;">5</div>
<div class="t" style="left:530.30px;top:597.55px;font-size:9px;color:#a0a0a0;font-weight:400;">6</div>
<div class="t" style="left:550.60px;top:597.55px;font-size:9px;color:#a0a0a0;font-weight:400;">7</div>
<div class="t" style="left:570.00px;top:597.55px;font-size:9px;color:#a0a0a0;font-weight:400;">8</div>
<div class="t" style="left:590.50px;top:597.55px;font-size:9px;color:#a0a0a0;font-weight:400;">9</div>
<div class="t" style="left:610.20px;top:597.55px;font-size:9px;color:#a0a0a0;font-weight:400;">10</div>
<svg class="ic" style="left:634px;top:600.6px" width="11" height="2" viewBox="0 0 11 2" fill="#cfcfcf"><circle cx="1" cy="1" r="0.7"/><circle cx="5.2" cy="1" r="0.7"/><circle cx="9.4" cy="1" r="0.7"/></svg>
<svg class="ic" style="left:661px;top:597.5px" width="6" height="8" viewBox="0 0 6 8" fill="none" stroke="#9c9c9c" stroke-width="1.1"><path d="M1 1L3.8 4L1 7"/></svg>
<svg class="ic" style="left:685.3px;top:597.5px" width="8" height="8" viewBox="0 0 8 8" fill="none" stroke="#9a9a9a" stroke-width="1.2"><path d="M1 1L3.6 4L1 7M3.6 1L6.2 4L3.6 7"/></svg>

</body></html>
